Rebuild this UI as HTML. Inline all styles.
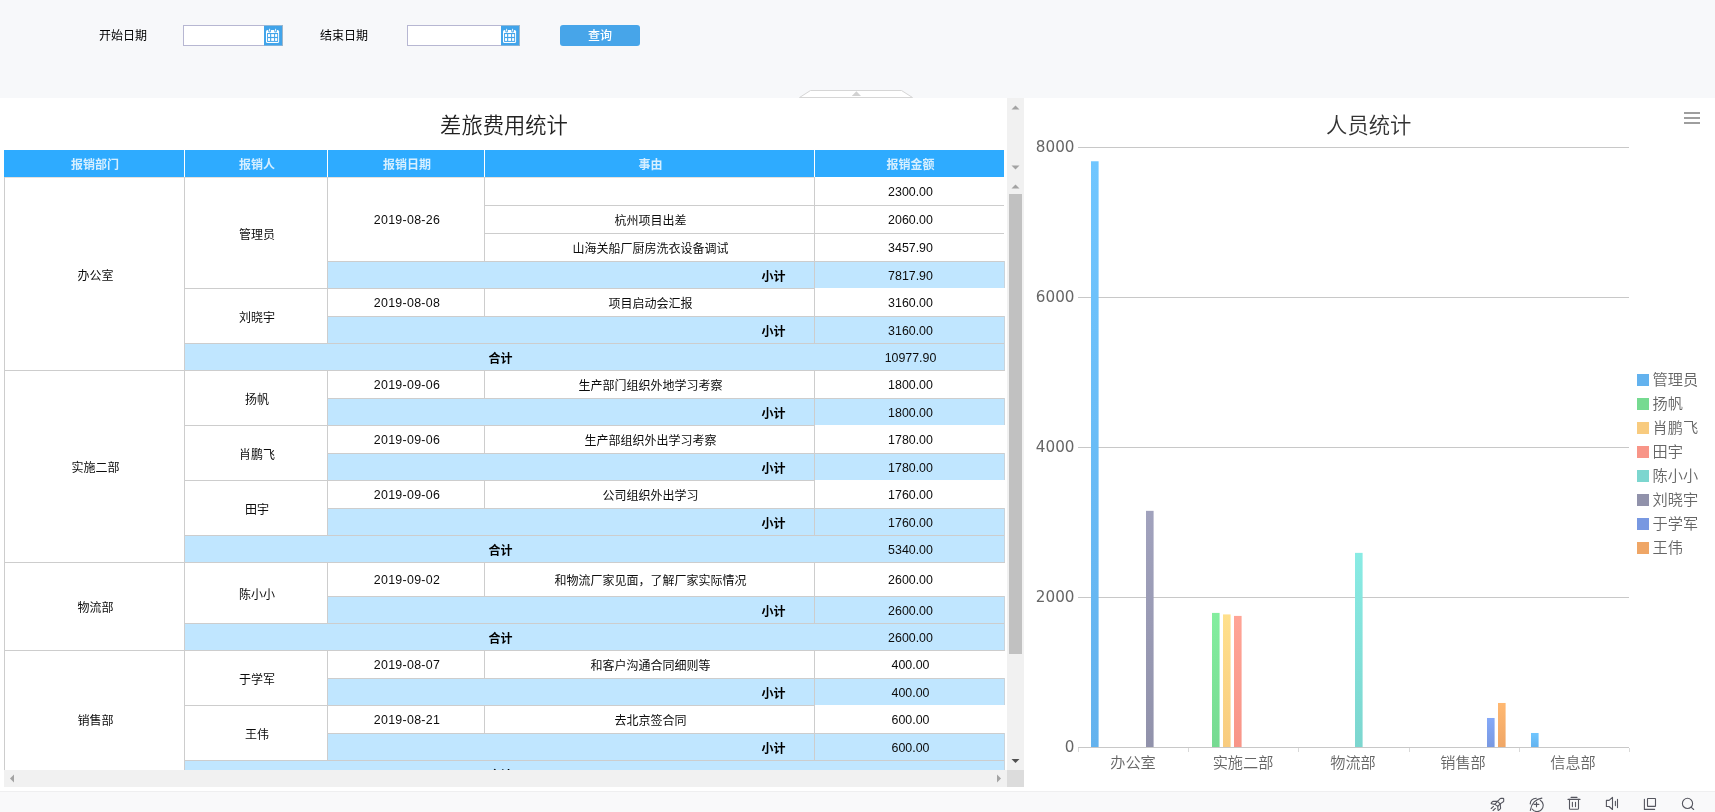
<!DOCTYPE html>
<html lang="zh-CN"><head><meta charset="utf-8"><title>差旅费用统计</title>
<style>
*{box-sizing:border-box;margin:0;padding:0}
html,body{width:1715px;height:812px;overflow:hidden;background:#f7f8fa;font-family:"Liberation Sans","Noto Sans CJK SC",sans-serif;font-size:12px;color:#111}
.abs{position:absolute}
#top{position:absolute;left:0;top:0;width:1715px;height:98px;background:#f7f8fa}
.lbl{position:absolute;font-size:12px;color:#000;line-height:16px;height:16px;white-space:nowrap}
.inp{position:absolute;height:21px;background:#fff;border:1px solid #b7b7d2;border-right:none}
.cal{position:absolute;width:19px;height:21px;background:#41a4ea;box-shadow:inset -1px 0 0 #9fb6c9, inset 0 1px 0 #8fb9da, inset 0 -1px 0 #7fb3dd}
#btn{position:absolute;left:560px;top:25px;width:80px;height:21px;background:#47a5e9;border-radius:3px;color:#fff;font-size:12px;font-weight:500;line-height:23px;text-align:center}
#left{position:absolute;left:0;top:98px;width:1024px;height:693px;background:#fff;overflow:hidden}
#right{position:absolute;left:1024px;top:98px;width:691px;height:693px;background:#fff;overflow:hidden}
#bot{position:absolute;left:0;top:791px;width:1715px;height:21px;background:#f9f9fa;box-shadow:inset 0 1px 0 #efeff0}
.c{position:absolute;padding-left:2px;height:12px;line-height:12px;text-align:center;white-space:nowrap;font-size:12px;color:#0c0c0c}
.h{color:#d6efff;font-weight:bold;font-family:"Liberation Sans","Noto Sans CJK SC",sans-serif}
.s{background:#c0e6ff}
.b{font-weight:bold;color:#000;font-family:"Liberation Sans","Noto Sans CJK SC",sans-serif}
.cj{}
.ttl{font-family:"Liberation Sans","Noto Sans CJK SC DemiLight","Noto Sans CJK SC",sans-serif}
.n{font-size:12.4px}
.dt{letter-spacing:.3px}
#wrap{position:absolute;left:0;top:0;width:1715px;height:812px;will-change:transform}
</style></head><body>
<div id="wrap">
<div id="top">
<div class="lbl" style="left:99px;top:28px">开始日期</div>
<div class="inp" style="left:183px;top:25px;width:81px"></div>
<div class="cal" style="left:264px;top:25px"><svg width="19" height="21" viewBox="264 25 19 21" style="display:block"><rect x="266" y="29.9" width="13.1" height="13.2" rx="1.6" fill="#fff"/><rect x="267.1" y="33" width="11" height="8.9" fill="#41a4ea"/><g fill="#fff"><rect x="268" y="34.1" width="2.1" height="2.8"/><rect x="271.2" y="34.1" width="2.9" height="2.8"/><rect x="275.1" y="34.1" width="2.1" height="2.8"/><rect x="268" y="38.1" width="2.1" height="2.8"/><rect x="271.2" y="38.1" width="2.9" height="2.8"/><rect x="275.1" y="38.1" width="2.1" height="2.8"/></g><path d="M269.6 29.4v1.8M275.6 29.4v1.8" stroke="#41a4ea" stroke-width="2.6" stroke-linecap="round"/><path d="M269.6 29.2v1.8M275.6 29.2v1.8" stroke="#fff" stroke-width="0.9" stroke-linecap="round"/></svg></div>
<div class="lbl" style="left:320px;top:28px">结束日期</div>
<div class="inp" style="left:407px;top:25px;width:94px"></div>
<div class="cal" style="left:501px;top:25px"><svg width="19" height="21" viewBox="264 25 19 21" style="display:block"><rect x="266" y="29.9" width="13.1" height="13.2" rx="1.6" fill="#fff"/><rect x="267.1" y="33" width="11" height="8.9" fill="#41a4ea"/><g fill="#fff"><rect x="268" y="34.1" width="2.1" height="2.8"/><rect x="271.2" y="34.1" width="2.9" height="2.8"/><rect x="275.1" y="34.1" width="2.1" height="2.8"/><rect x="268" y="38.1" width="2.1" height="2.8"/><rect x="271.2" y="38.1" width="2.9" height="2.8"/><rect x="275.1" y="38.1" width="2.1" height="2.8"/></g><path d="M269.6 29.4v1.8M275.6 29.4v1.8" stroke="#41a4ea" stroke-width="2.6" stroke-linecap="round"/><path d="M269.6 29.2v1.8M275.6 29.2v1.8" stroke="#fff" stroke-width="0.9" stroke-linecap="round"/></svg></div>
<div id="btn">查询</div>
<svg class="abs" style="left:796px;top:88px" width="120" height="12" viewBox="0 0 120 12"><path d="M3.5 9.5 L14.5 2.5 L105.5 2.5 L116.5 9.5 Z" fill="#fff" stroke="#d6d6d6" stroke-width="1"/><path d="M55.8 7.9 L60.4 3.3 L65 7.9 Z" fill="#d2d2d2"/></svg>
</div>
<div id="left">
<div class="abs ttl" style="left:0;top:14px;width:1008px;height:28px;line-height:28px;text-align:center;font-size:21.3px;color:#222;">差旅费用统计</div>
<div class="abs" style="left:4px;top:52px;width:180px;height:27px;background:#2eabff"></div>
<div class="abs" style="left:185px;top:52px;width:142px;height:27px;background:#2eabff"></div>
<div class="abs" style="left:328px;top:52px;width:156px;height:27px;background:#2eabff"></div>
<div class="abs" style="left:485px;top:52px;width:329px;height:27px;background:#2eabff"></div>
<div class="abs" style="left:815px;top:52px;width:189px;height:27px;background:#2eabff"></div>
<div class="abs" style="left:328px;top:163px;width:677px;height:27px;background:#c0e6ff"></div>
<div class="abs" style="left:328px;top:218px;width:677px;height:27px;background:#c0e6ff"></div>
<div class="abs" style="left:185px;top:245px;width:820px;height:27px;background:#c0e6ff"></div>
<div class="abs" style="left:328px;top:300px;width:677px;height:27px;background:#c0e6ff"></div>
<div class="abs" style="left:328px;top:355px;width:677px;height:27px;background:#c0e6ff"></div>
<div class="abs" style="left:328px;top:410px;width:677px;height:27px;background:#c0e6ff"></div>
<div class="abs" style="left:185px;top:437px;width:820px;height:27px;background:#c0e6ff"></div>
<div class="abs" style="left:328px;top:498px;width:677px;height:27px;background:#c0e6ff"></div>
<div class="abs" style="left:185px;top:525px;width:820px;height:27px;background:#c0e6ff"></div>
<div class="abs" style="left:328px;top:580px;width:677px;height:27px;background:#c0e6ff"></div>
<div class="abs" style="left:328px;top:635px;width:677px;height:27px;background:#c0e6ff"></div>
<div class="abs" style="left:185px;top:662px;width:820px;height:28px;background:#c0e6ff"></div>
<div class="abs" style="left:4px;top:79px;width:810px;height:1px;background:#e6e1dd"></div>
<div class="abs" style="left:484px;top:107px;width:520px;height:1px;background:#cdcdcd"></div>
<div class="abs" style="left:484px;top:135px;width:520px;height:1px;background:#cdcdcd"></div>
<div class="abs" style="left:484px;top:79px;width:1px;height:84px;background:#cdcdcd"></div>
<div class="abs" style="left:814px;top:79px;width:1px;height:84px;background:#cdcdcd"></div>
<div class="abs" style="left:327px;top:163px;width:678px;height:1px;background:#cdcdcd"></div>
<div class="abs" style="left:814px;top:163px;width:1px;height:27px;background:#cdcdcd"></div>
<div class="abs" style="left:1004px;top:163px;width:1px;height:27px;background:#c9d4dc"></div>
<div class="abs" style="left:327px;top:79px;width:1px;height:111px;background:#cdcdcd"></div>
<div class="abs" style="left:184px;top:190px;width:631px;height:1px;background:#cdcdcd"></div>
<div class="abs" style="left:484px;top:190px;width:1px;height:28px;background:#cdcdcd"></div>
<div class="abs" style="left:814px;top:190px;width:1px;height:28px;background:#cdcdcd"></div>
<div class="abs" style="left:327px;top:218px;width:678px;height:1px;background:#cdcdcd"></div>
<div class="abs" style="left:814px;top:218px;width:1px;height:27px;background:#cdcdcd"></div>
<div class="abs" style="left:1004px;top:218px;width:1px;height:27px;background:#c9d4dc"></div>
<div class="abs" style="left:327px;top:190px;width:1px;height:55px;background:#cdcdcd"></div>
<div class="abs" style="left:184px;top:245px;width:821px;height:1px;background:#cdcdcd"></div>
<div class="abs" style="left:184px;top:245px;width:821px;height:1px;background:#cdcdcd"></div>
<div class="abs" style="left:1004px;top:245px;width:1px;height:27px;background:#c9d4dc"></div>
<div class="abs" style="left:4px;top:272px;width:1001px;height:1px;background:#cdcdcd"></div>
<div class="abs" style="left:484px;top:272px;width:1px;height:28px;background:#cdcdcd"></div>
<div class="abs" style="left:814px;top:272px;width:1px;height:28px;background:#cdcdcd"></div>
<div class="abs" style="left:327px;top:300px;width:678px;height:1px;background:#cdcdcd"></div>
<div class="abs" style="left:814px;top:300px;width:1px;height:27px;background:#cdcdcd"></div>
<div class="abs" style="left:1004px;top:300px;width:1px;height:27px;background:#c9d4dc"></div>
<div class="abs" style="left:327px;top:272px;width:1px;height:55px;background:#cdcdcd"></div>
<div class="abs" style="left:184px;top:327px;width:631px;height:1px;background:#cdcdcd"></div>
<div class="abs" style="left:484px;top:327px;width:1px;height:28px;background:#cdcdcd"></div>
<div class="abs" style="left:814px;top:327px;width:1px;height:28px;background:#cdcdcd"></div>
<div class="abs" style="left:327px;top:355px;width:678px;height:1px;background:#cdcdcd"></div>
<div class="abs" style="left:814px;top:355px;width:1px;height:27px;background:#cdcdcd"></div>
<div class="abs" style="left:1004px;top:355px;width:1px;height:27px;background:#c9d4dc"></div>
<div class="abs" style="left:327px;top:327px;width:1px;height:55px;background:#cdcdcd"></div>
<div class="abs" style="left:184px;top:382px;width:631px;height:1px;background:#cdcdcd"></div>
<div class="abs" style="left:484px;top:382px;width:1px;height:28px;background:#cdcdcd"></div>
<div class="abs" style="left:814px;top:382px;width:1px;height:28px;background:#cdcdcd"></div>
<div class="abs" style="left:327px;top:410px;width:678px;height:1px;background:#cdcdcd"></div>
<div class="abs" style="left:814px;top:410px;width:1px;height:27px;background:#cdcdcd"></div>
<div class="abs" style="left:1004px;top:410px;width:1px;height:27px;background:#c9d4dc"></div>
<div class="abs" style="left:327px;top:382px;width:1px;height:55px;background:#cdcdcd"></div>
<div class="abs" style="left:184px;top:437px;width:821px;height:1px;background:#cdcdcd"></div>
<div class="abs" style="left:184px;top:437px;width:821px;height:1px;background:#cdcdcd"></div>
<div class="abs" style="left:1004px;top:437px;width:1px;height:27px;background:#c9d4dc"></div>
<div class="abs" style="left:4px;top:464px;width:1001px;height:1px;background:#cdcdcd"></div>
<div class="abs" style="left:484px;top:464px;width:1px;height:34px;background:#cdcdcd"></div>
<div class="abs" style="left:814px;top:464px;width:1px;height:34px;background:#cdcdcd"></div>
<div class="abs" style="left:327px;top:498px;width:678px;height:1px;background:#cdcdcd"></div>
<div class="abs" style="left:814px;top:498px;width:1px;height:27px;background:#cdcdcd"></div>
<div class="abs" style="left:1004px;top:498px;width:1px;height:27px;background:#c9d4dc"></div>
<div class="abs" style="left:327px;top:464px;width:1px;height:61px;background:#cdcdcd"></div>
<div class="abs" style="left:184px;top:525px;width:821px;height:1px;background:#cdcdcd"></div>
<div class="abs" style="left:184px;top:525px;width:821px;height:1px;background:#cdcdcd"></div>
<div class="abs" style="left:1004px;top:525px;width:1px;height:27px;background:#c9d4dc"></div>
<div class="abs" style="left:4px;top:552px;width:1001px;height:1px;background:#cdcdcd"></div>
<div class="abs" style="left:484px;top:552px;width:1px;height:28px;background:#cdcdcd"></div>
<div class="abs" style="left:814px;top:552px;width:1px;height:28px;background:#cdcdcd"></div>
<div class="abs" style="left:327px;top:580px;width:678px;height:1px;background:#cdcdcd"></div>
<div class="abs" style="left:814px;top:580px;width:1px;height:27px;background:#cdcdcd"></div>
<div class="abs" style="left:1004px;top:580px;width:1px;height:27px;background:#c9d4dc"></div>
<div class="abs" style="left:327px;top:552px;width:1px;height:55px;background:#cdcdcd"></div>
<div class="abs" style="left:184px;top:607px;width:631px;height:1px;background:#cdcdcd"></div>
<div class="abs" style="left:484px;top:607px;width:1px;height:28px;background:#cdcdcd"></div>
<div class="abs" style="left:814px;top:607px;width:1px;height:28px;background:#cdcdcd"></div>
<div class="abs" style="left:327px;top:635px;width:678px;height:1px;background:#cdcdcd"></div>
<div class="abs" style="left:814px;top:635px;width:1px;height:27px;background:#cdcdcd"></div>
<div class="abs" style="left:1004px;top:635px;width:1px;height:27px;background:#c9d4dc"></div>
<div class="abs" style="left:327px;top:607px;width:1px;height:55px;background:#cdcdcd"></div>
<div class="abs" style="left:184px;top:662px;width:821px;height:1px;background:#cdcdcd"></div>
<div class="abs" style="left:184px;top:662px;width:821px;height:1px;background:#cdcdcd"></div>
<div class="abs" style="left:1004px;top:662px;width:1px;height:28px;background:#c9d4dc"></div>
<div class="abs" style="left:4px;top:690px;width:1001px;height:1px;background:#cdcdcd"></div>
<div class="abs" style="left:4px;top:79px;width:1px;height:611px;background:#cdcdcd"></div>
<div class="abs" style="left:184px;top:79px;width:1px;height:611px;background:#cdcdcd"></div>
<div class="c h" style="left:4px;top:61px;width:180px;">报销部门</div>
<div class="c h" style="left:185px;top:61px;width:142px;">报销人</div>
<div class="c h" style="left:328px;top:61px;width:156px;">报销日期</div>
<div class="c h" style="left:485px;top:61px;width:329px;">事由</div>
<div class="c h" style="left:815px;top:61px;width:189px;">报销金额</div>
<div class="c n" style="left:815px;top:88px;width:189px;">2300.00</div>
<div class="c cj" style="left:485px;top:117px;width:329px;">杭州项目出差</div>
<div class="c n" style="left:815px;top:116px;width:189px;">2060.00</div>
<div class="c cj" style="left:485px;top:145px;width:329px;">山海关船厂厨房洗衣设备调试</div>
<div class="c n" style="left:815px;top:144px;width:189px;">3457.90</div>
<div class="c n dt" style="left:328px;top:116px;width:156px;">2019-08-26</div>
<div class="c cj" style="left:328px;top:173px;width:486px;"><span class="b" style="position:absolute;top:0;right:28.5px">小计</span></div>
<div class="c n" style="left:815px;top:172px;width:189px;">7817.90</div>
<div class="c cj" style="left:185px;top:131px;width:142px;">管理员</div>
<div class="c cj" style="left:485px;top:200px;width:329px;">项目启动会汇报</div>
<div class="c n" style="left:815px;top:199px;width:189px;">3160.00</div>
<div class="c n dt" style="left:328px;top:199px;width:156px;">2019-08-08</div>
<div class="c cj" style="left:328px;top:228px;width:486px;"><span class="b" style="position:absolute;top:0;right:28.5px">小计</span></div>
<div class="c n" style="left:815px;top:227px;width:189px;">3160.00</div>
<div class="c cj" style="left:185px;top:214px;width:142px;">刘晓宇</div>
<div class="c cj" style="left:185px;top:255px;width:630px;"><span class="b" style="position:absolute;top:0;left:303.4px">合计</span></div>
<div class="c n" style="left:815px;top:254px;width:189px;">10977.90</div>
<div class="c cj" style="left:5px;top:172px;width:179px;">办公室</div>
<div class="c cj" style="left:485px;top:282px;width:329px;">生产部门组织外地学习考察</div>
<div class="c n" style="left:815px;top:281px;width:189px;">1800.00</div>
<div class="c n dt" style="left:328px;top:281px;width:156px;">2019-09-06</div>
<div class="c cj" style="left:328px;top:310px;width:486px;"><span class="b" style="position:absolute;top:0;right:28.5px">小计</span></div>
<div class="c n" style="left:815px;top:309px;width:189px;">1800.00</div>
<div class="c cj" style="left:185px;top:296px;width:142px;">扬帆</div>
<div class="c cj" style="left:485px;top:337px;width:329px;">生产部组织外出学习考察</div>
<div class="c n" style="left:815px;top:336px;width:189px;">1780.00</div>
<div class="c n dt" style="left:328px;top:336px;width:156px;">2019-09-06</div>
<div class="c cj" style="left:328px;top:365px;width:486px;"><span class="b" style="position:absolute;top:0;right:28.5px">小计</span></div>
<div class="c n" style="left:815px;top:364px;width:189px;">1780.00</div>
<div class="c cj" style="left:185px;top:351px;width:142px;">肖鹏飞</div>
<div class="c cj" style="left:485px;top:392px;width:329px;">公司组织外出学习</div>
<div class="c n" style="left:815px;top:391px;width:189px;">1760.00</div>
<div class="c n dt" style="left:328px;top:391px;width:156px;">2019-09-06</div>
<div class="c cj" style="left:328px;top:420px;width:486px;"><span class="b" style="position:absolute;top:0;right:28.5px">小计</span></div>
<div class="c n" style="left:815px;top:419px;width:189px;">1760.00</div>
<div class="c cj" style="left:185px;top:406px;width:142px;">田宇</div>
<div class="c cj" style="left:185px;top:447px;width:630px;"><span class="b" style="position:absolute;top:0;left:303.4px">合计</span></div>
<div class="c n" style="left:815px;top:446px;width:189px;">5340.00</div>
<div class="c cj" style="left:5px;top:364px;width:179px;">实施二部</div>
<div class="c cj" style="left:485px;top:477px;width:329px;">和物流厂家见面，了解厂家实际情况</div>
<div class="c n" style="left:815px;top:476px;width:189px;">2600.00</div>
<div class="c n dt" style="left:328px;top:476px;width:156px;">2019-09-02</div>
<div class="c cj" style="left:328px;top:508px;width:486px;"><span class="b" style="position:absolute;top:0;right:28.5px">小计</span></div>
<div class="c n" style="left:815px;top:507px;width:189px;">2600.00</div>
<div class="c cj" style="left:185px;top:491px;width:142px;">陈小小</div>
<div class="c cj" style="left:185px;top:535px;width:630px;"><span class="b" style="position:absolute;top:0;left:303.4px">合计</span></div>
<div class="c n" style="left:815px;top:534px;width:189px;">2600.00</div>
<div class="c cj" style="left:5px;top:504px;width:179px;">物流部</div>
<div class="c cj" style="left:485px;top:562px;width:329px;">和客户沟通合同细则等</div>
<div class="c n" style="left:815px;top:561px;width:189px;">400.00</div>
<div class="c n dt" style="left:328px;top:561px;width:156px;">2019-08-07</div>
<div class="c cj" style="left:328px;top:590px;width:486px;"><span class="b" style="position:absolute;top:0;right:28.5px">小计</span></div>
<div class="c n" style="left:815px;top:589px;width:189px;">400.00</div>
<div class="c cj" style="left:185px;top:576px;width:142px;">于学军</div>
<div class="c cj" style="left:485px;top:617px;width:329px;">去北京签合同</div>
<div class="c n" style="left:815px;top:616px;width:189px;">600.00</div>
<div class="c n dt" style="left:328px;top:616px;width:156px;">2019-08-21</div>
<div class="c cj" style="left:328px;top:645px;width:486px;"><span class="b" style="position:absolute;top:0;right:28.5px">小计</span></div>
<div class="c n" style="left:815px;top:644px;width:189px;">600.00</div>
<div class="c cj" style="left:185px;top:631px;width:142px;">王伟</div>
<div class="c cj" style="left:185px;top:672px;width:630px;"><span class="b" style="position:absolute;top:0;left:303.4px">合计</span></div>
<div class="c n" style="left:815px;top:671px;width:189px;">1000.00</div>
<div class="c cj" style="left:5px;top:617px;width:179px;">销售部</div>
<div class="abs" style="left:0;top:672px;width:1024px;height:20px;background:#fff"></div>
<div class="abs" style="left:1007px;top:0;width:17px;height:672px;background:#f1f1f1"></div>
<div class="abs" style="left:1009px;top:96px;width:13px;height:460px;background:#c1c1c1"></div>
<div class="abs" style="left:4px;top:672px;width:1003px;height:17px;background:#f1f1f1"></div>
<div class="abs" style="left:1007px;top:672px;width:17px;height:17px;background:#dcdcdc"></div>
<svg class="abs" style="left:0;top:0" width="1024" height="692"><polygon points="1011.5,11.5 1015.5,7.5 1019.5,11.5" fill="#a3a3a3"/><polygon points="1011.5,67.5 1015.5,71.5 1019.5,67.5" fill="#a3a3a3"/><polygon points="1011.5,90.5 1015.5,86.5 1019.5,90.5" fill="#a3a3a3"/><polygon points="1011.5,661 1015.5,665 1019.5,661" fill="#505050"/><polygon points="14,676.5 10,680.5 14,684.5" fill="#a3a3a3"/><polygon points="997,676.5 1001,680.5 997,684.5" fill="#a3a3a3"/></svg>
</div>
<div id="right">
<svg class="abs" style="left:0;top:0" width="691" height="692" viewBox="1024 98 691 692" font-family="'Liberation Sans','Noto Sans CJK SC DemiLight','Noto Sans CJK SC',sans-serif">
<defs>
<linearGradient id="g0" x1="0" y1="0" x2="0" y2="1"><stop offset="0" stop-color="#70c6ff"/><stop offset="1" stop-color="#63b2ee"/></linearGradient>
<linearGradient id="g1" x1="0" y1="0" x2="0" y2="1"><stop offset="0" stop-color="#84ee9f"/><stop offset="1" stop-color="#76da91"/></linearGradient>
<linearGradient id="g2" x1="0" y1="0" x2="0" y2="1"><stop offset="0" stop-color="#ffe08c"/><stop offset="1" stop-color="#f8cb7f"/></linearGradient>
<linearGradient id="g3" x1="0" y1="0" x2="0" y2="1"><stop offset="0" stop-color="#ffa496"/><stop offset="1" stop-color="#f89588"/></linearGradient>
<linearGradient id="g4" x1="0" y1="0" x2="0" y2="1"><stop offset="0" stop-color="#89ebe4"/><stop offset="1" stop-color="#7cd6cf"/></linearGradient>
<linearGradient id="g5" x1="0" y1="0" x2="0" y2="1"><stop offset="0" stop-color="#a1a2bd"/><stop offset="1" stop-color="#9192ab"/></linearGradient>
<linearGradient id="g6" x1="0" y1="0" x2="0" y2="1"><stop offset="0" stop-color="#85a9f8"/><stop offset="1" stop-color="#7898e1"/></linearGradient>
<linearGradient id="g7" x1="0" y1="0" x2="0" y2="1"><stop offset="0" stop-color="#ffb871"/><stop offset="1" stop-color="#efa666"/></linearGradient>
</defs>
<text x="1368.7" y="133" text-anchor="middle" font-size="21.3" fill="#333">人员统计</text>
<g fill="#9e9e9e"><rect x="1684" y="112" width="16" height="2"/><rect x="1684" y="117" width="16" height="2"/><rect x="1684" y="122" width="16" height="2"/></g>
<rect x="1078" y="147" width="551" height="1" fill="#c8c8c8"/>
<text x="1074.5" y="152.2" text-anchor="end" font-size="15.2" fill="#666" font-family="'DejaVu Sans',sans-serif">8000</text>
<rect x="1078" y="297" width="551" height="1" fill="#c8c8c8"/>
<text x="1074.5" y="302.2" text-anchor="end" font-size="15.2" fill="#666" font-family="'DejaVu Sans',sans-serif">6000</text>
<rect x="1078" y="447" width="551" height="1" fill="#c8c8c8"/>
<text x="1074.5" y="452.2" text-anchor="end" font-size="15.2" fill="#666" font-family="'DejaVu Sans',sans-serif">4000</text>
<rect x="1078" y="597" width="551" height="1" fill="#c8c8c8"/>
<text x="1074.5" y="602.2" text-anchor="end" font-size="15.2" fill="#666" font-family="'DejaVu Sans',sans-serif">2000</text>
<rect x="1078" y="747" width="551" height="1" fill="#c8c8c8"/>
<text x="1074.5" y="752.2" text-anchor="end" font-size="15.2" fill="#666" font-family="'DejaVu Sans',sans-serif">0</text>
<rect x="1078" y="748" width="1" height="4" fill="#d9d9d9"/>
<rect x="1188" y="748" width="1" height="4" fill="#d9d9d9"/>
<rect x="1298" y="748" width="1" height="4" fill="#d9d9d9"/>
<rect x="1409" y="748" width="1" height="4" fill="#d9d9d9"/>
<rect x="1519" y="748" width="1" height="4" fill="#d9d9d9"/>
<rect x="1629" y="748" width="1" height="4" fill="#d9d9d9"/>
<text x="1133" y="768" text-anchor="middle" font-size="15.2" fill="#666">办公室</text>
<text x="1243" y="768" text-anchor="middle" font-size="15.2" fill="#666">实施二部</text>
<text x="1353" y="768" text-anchor="middle" font-size="15.2" fill="#666">物流部</text>
<text x="1463" y="768" text-anchor="middle" font-size="15.2" fill="#666">销售部</text>
<text x="1573" y="768" text-anchor="middle" font-size="15.2" fill="#666">信息部</text>
<rect x="1091" y="161.267" width="7.6" height="586.733" fill="url(#g0)"/>
<rect x="1146" y="510.842" width="7.6" height="237.158" fill="url(#g5)"/>
<rect x="1212" y="612.91" width="7.6" height="135.09" fill="url(#g1)"/>
<rect x="1223" y="614.411" width="7.6" height="133.589" fill="url(#g2)"/>
<rect x="1234" y="615.912" width="7.6" height="132.088" fill="url(#g3)"/>
<rect x="1355" y="552.87" width="7.6" height="195.13" fill="url(#g4)"/>
<rect x="1487" y="717.98" width="7.6" height="30.02" fill="url(#g6)"/>
<rect x="1498" y="702.97" width="7.6" height="45.03" fill="url(#g7)"/>
<rect x="1531" y="732.99" width="7.6" height="15.01" fill="url(#g0)"/>
<rect x="1078" y="747" width="551" height="1" fill="#c8c8c8"/>
<rect x="1637" y="374" width="12" height="12" fill="#63b2ee"/>
<text x="1652.6" y="385.4" font-size="15.2" fill="#666">管理员</text>
<rect x="1637" y="398" width="12" height="12" fill="#76da91"/>
<text x="1652.6" y="409.4" font-size="15.2" fill="#666">扬帆</text>
<rect x="1637" y="422" width="12" height="12" fill="#f8cb7f"/>
<text x="1652.6" y="433.4" font-size="15.2" fill="#666">肖鹏飞</text>
<rect x="1637" y="446" width="12" height="12" fill="#f89588"/>
<text x="1652.6" y="457.4" font-size="15.2" fill="#666">田宇</text>
<rect x="1637" y="470" width="12" height="12" fill="#7cd6cf"/>
<text x="1652.6" y="481.4" font-size="15.2" fill="#666">陈小小</text>
<rect x="1637" y="494" width="12" height="12" fill="#9192ab"/>
<text x="1652.6" y="505.4" font-size="15.2" fill="#666">刘晓宇</text>
<rect x="1637" y="518" width="12" height="12" fill="#7898e1"/>
<text x="1652.6" y="529.4" font-size="15.2" fill="#666">于学军</text>
<rect x="1637" y="542" width="12" height="12" fill="#efa666"/>
<text x="1652.6" y="553.4" font-size="15.2" fill="#666">王伟</text>
</svg>
</div>
<div id="bot">
<svg class="abs" style="left:0;top:0" width="1715" height="21" viewBox="0 791 1715 21" fill="none" stroke="#55565f" stroke-width="1.1" stroke-linecap="round" stroke-linejoin="round">
<path d="M1497.5,801.3 L1500.2,798.7 Q1500.5,798.4 1500.9,798.4 L1503,798.4 Q1503.7,798.4 1503.7,799.1 L1503.7,800.9 Q1503.7,801.4 1503.3,801.7 L1500.2,803.9 L1497.8,806.4 L1494.9,804.4 Z"/>
<path d="M1497.5,801.3 L1500.2,803.9"/>
<path d="M1497.3,801.4 L1493,801.3 Q1492.6,801.3 1492.4,801.6 L1491.2,803.2 Q1491,803.6 1491.5,803.7 L1494.9,804.4"/>
<path d="M1500.2,803.9 L1500.6,808.2 Q1500.6,808.6 1500.3,808.8 L1498.6,810.3 Q1498.1,810.6 1498,810 L1497.7,806.4"/>
<path d="M1491.2,808.5 L1493.5,806.4 M1493.1,810.5 L1495.4,808.3"/>
<path d="M1540.3,800.3 A6.1,6.1 0 1 1 1532.1,809.0"/>
<path d="M1530.2,803.9 C1530.4,800.5 1533,798.3 1536.3,798.2"/>
<path d="M1541.9,798.1 C1536,798.8 1531.2,803.5 1530.3,810.4"/>
<path d="M1534.1,804.4 H1538.9 M1536.5,802.3 V806.7"/>
<path d="M1571.1,797.4 H1577 M1568,799.4 H1580"/>
<path d="M1569.5,799.4 V808.5 Q1569.5,809.3 1570.3,809.3 H1577.7 Q1578.5,809.3 1578.5,808.5 V799.4"/>
<path d="M1572.4,802.3 V806.6 M1575.5,802.3 V806.6"/>
<path d="M1606.4,800.4 V806.5 H1609.1 L1612.5,809.5 V797.3 L1609.1,800.4 Z"/>
<path d="M1615.4,801.3 V805.6 M1617.5,799.3 V807.6"/>
<rect x="1647.5" y="798.5" width="8" height="7.9" rx="0.4"/>
<path d="M1644.4,799.3 V809.4 H1654.6"/>
<circle cx="1687.5" cy="803.4" r="5.1"/><path d="M1691.3,807.3 L1693.7,809.5"/>
</svg>
</div>
</div>
</body></html>
